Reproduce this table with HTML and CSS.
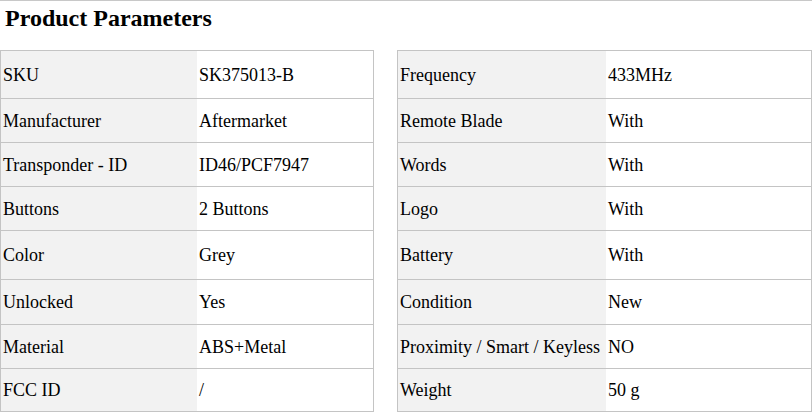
FILE: index.html
```html
<!DOCTYPE html>
<html>
<head>
<meta charset="utf-8">
<link rel="stylesheet" href="styles.css">
</head>
<body>
<div class="page">
  <h2 class="title">Product Parameters</h2>
  <div class="tables">
    <table class="params left">
      <tr class="h48"><td class="k">SKU</td><td class="v">SK375013-B</td></tr>
      <tr class="h44"><td class="k">Manufacturer</td><td class="v">Aftermarket</td></tr>
      <tr class="h44"><td class="k">Transponder - ID</td><td class="v">ID46/PCF7947</td></tr>
      <tr class="h44"><td class="k">Buttons</td><td class="v">2 Buttons</td></tr>
      <tr class="h49"><td class="k">Color</td><td class="v">Grey</td></tr>
      <tr class="h45"><td class="k">Unlocked</td><td class="v">Yes</td></tr>
      <tr class="h44"><td class="k">Material</td><td class="v">ABS+Metal</td></tr>
      <tr class="h43"><td class="k">FCC ID</td><td class="v">/</td></tr>
    </table>
    <table class="params right">
      <tr class="h48"><td class="k">Frequency</td><td class="v">433MHz</td></tr>
      <tr class="h44"><td class="k">Remote Blade</td><td class="v">With</td></tr>
      <tr class="h44"><td class="k">Words</td><td class="v">With</td></tr>
      <tr class="h44"><td class="k">Logo</td><td class="v">With</td></tr>
      <tr class="h49"><td class="k">Battery</td><td class="v">With</td></tr>
      <tr class="h45"><td class="k">Condition</td><td class="v">New</td></tr>
      <tr class="h44"><td class="k">Proximity / Smart / Keyless</td><td class="v">NO</td></tr>
      <tr class="h43"><td class="k">Weight</td><td class="v">50 g</td></tr>
    </table>
  </div>
</div>
</body>
</html>
```
FILE: styles.css
```css
html, body {
  margin: 0;
  padding: 0;
  background: #fff;
}
body {
  font-family: "Liberation Serif", "Times New Roman", serif;
  font-size: 18px;
  color: #000;
}
.page {
  border-top: 1px solid #c8c8c8;
}
.title {
  margin: 0;
  padding: 3px 5px 0;
  font-size: 24px;
  line-height: 28px;
  font-weight: bold;
  height: 45px;
  box-sizing: border-box;
}
.tables {
  display: flex;
  gap: 23px;
  align-items: flex-start;
  margin-top: 4px;
}
.params {
  border-collapse: collapse;
  border: 1px solid #c4c4c4;
}
.params.left { width: 374px; }
.params.right { width: 415px; }
.params tr { border-top: 1px solid #c4c4c4; }
.params td {
  padding: 1px 2px 0 2px;
  vertical-align: middle;
  white-space: nowrap;
}
.params .k { background: #f2f2f2; }
.params .v { background: #fff; }
.params.left .k { width: 192px; }
.params.right .k { width: 204px; }
.h48 td { height: 46px; }
.h44 td { height: 42px; }
.h49 td { height: 47px; }
.h45 td { height: 43px; }
.h43 td { height: 41px; }
```
